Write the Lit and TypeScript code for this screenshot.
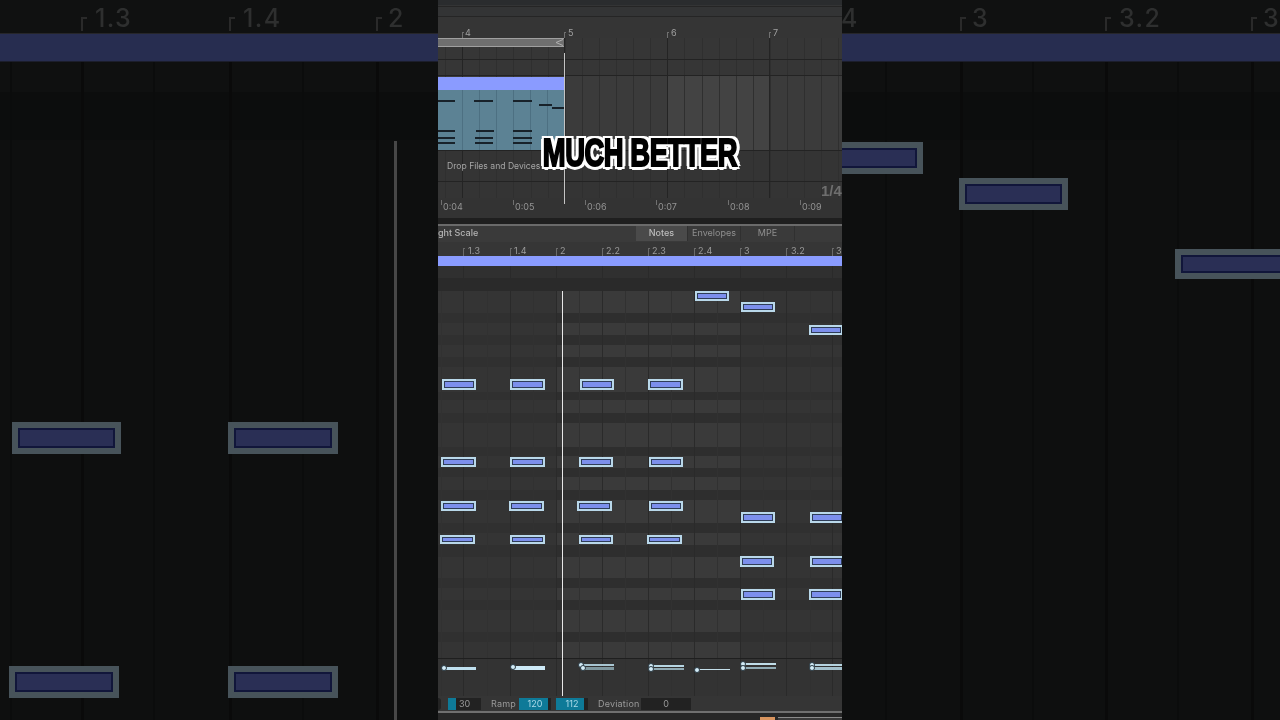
import { LitElement, html, css } from "lit";
import { customElement } from "lit/decorators.js";

const X0 = 438;
type Note = [number, number, number, number];

const MAJOR = [463.5, 510.5, 556.5, 602.5, 648.5, 694.5, 740.5, 786.5, 832.5];
const MINOR = [441, 487.5, 533, 579.5, 625.5, 671.5, 717.5, 763.5, 810];
const ARR_BARS = [462, 564, 667, 769];
const ARR_SUB: number[] = [];
for (let x = 445; x < 842; x += 17.1) ARR_SUB.push(Math.round(x));

const DARK_ROWS: [number, number][] = [
  [313, 323], [335, 345], [357, 367], [392, 400], [413, 423], [447, 456], [468, 477],
  [490, 500], [523, 533], [545, 557], [578, 588], [600, 610], [632, 642],
];

const NOTES: Note[] = [
  [695, 291, 34, 10], [741, 302, 34, 10], [809, 325, 34, 10],
  [442, 379, 34, 11], [510, 379, 35, 11], [580, 379, 34, 11], [648, 379, 35, 11],
  [441, 457, 35, 10], [510, 457, 35, 10], [579, 457, 34, 10], [649, 457, 34, 10],
  [441, 501, 35, 10], [509, 501, 35, 10], [577, 501, 35, 10], [649, 501, 34, 10],
  [440, 535, 35, 9], [510, 535, 35, 9], [579, 535, 34, 9], [647, 535, 35, 9],
  [741, 512, 34, 11], [810, 512, 34, 11],
  [740, 556, 34, 11], [810, 556, 34, 11],
  [741, 589, 34, 11], [809, 589, 34, 11],
];

// x, y, width, thickness, tone
const VEL: [number, number, number, number, string][] = [
  [444, 667, 32, 3, "#bfe0ef"],
  [513, 666, 32, 4, "#cdeaf7"],
  [581, 664, 33, 2, "#a9c6d2"], [583, 667, 31, 3, "#7f979f"],
  [651, 665, 33, 2, "#b7d6e3"], [651, 668, 33, 2, "#8fa9b3"],
  [697, 669, 33, 1, "#c4dfea"],
  [743, 663, 33, 2, "#c0dde9"], [743, 667, 33, 2, "#90abb5"],
  [812, 664, 30, 2, "#b6d3df"], [812, 667, 30, 3, "#a3c0cc"],
];

const CLIP_DASHES: Note[] = [
  [438, 100, 17, 1], [474, 100, 19, 1], [513, 100, 19, 1], [539, 104, 13, 1], [552, 107, 12, 1],
  [438, 130, 17, 1], [476, 130, 18, 1], [513, 130, 19, 1],
  [438, 137, 17, 1], [475, 137, 18, 1], [513, 137, 19, 1],
  [438, 142, 17, 1], [475, 142, 18, 1], [513, 142, 19, 1],
];

const pos = (x: number, y: number, w: number, h: number) =>
  `left:${x}px;top:${y}px;width:${w}px;height:${h}px`;

@customElement("side-panel")
class SidePanel extends LitElement {
  static properties = {
    origin: { type: Number },
    labels: { type: Array },
    major: { type: Array },
    minor: { type: Array },
    notes: { type: Array },
    playhead: { type: Number },
  };
  origin = 0;
  labels: [number, string][] = [];
  major: number[] = [];
  minor: number[] = [];
  notes: Note[] = [];
  playhead = 0;

  static styles = css`
    :host { display: block; width: 438px; height: 720px; }
    .wrap { position: relative; width: 100%; height: 100%; display: flex; flex-direction: column; overflow: hidden; background: #0e0f0f; filter: blur(0.7px); }
    .top { height: 33px; background: #101111; flex: none; }
    .band { height: 29px; background: #272d50; flex: none; border-top: 1px solid #26262a; border-bottom: 1px solid #1c1e2c; box-sizing: border-box; }
    .r1 { height: 30px; background: #0f1010; flex: none; }
    .r2 { height: 48px; background: #0c0d0d; flex: none; }
    .r3 { flex: 1; background: #0e0f0f; }
    .v { position: absolute; width: 3px; top: 62px; bottom: 0; background: #0a0a0a; }
    .v.min { width: 2px; background: #0b0c0c; }
    .tick { position: absolute; width: 6px; border-left: 2px solid #2a2a2a; border-top: 2px solid #2a2a2a; box-sizing: border-box; height: 14px; top: 17px; }
    .lab { position: absolute; top: 3px; font: 500 25px/30px "Inter", "Liberation Sans", sans-serif; letter-spacing: 1.4px; color: #2e2f2f; white-space: nowrap; }
    .note { position: absolute; box-sizing: border-box; border: 6px solid #47535a; background: #2a2f55; box-shadow: inset 0 0 0 2px #11163a; }
    .ph { position: absolute; top: 141px; bottom: 0; width: 3px; background: #474747; }
  `;
  render() {
    const o = this.origin;
    return html`<div class="wrap">
      <div class="top"></div><div class="band"></div><div class="r1"></div><div class="r2"></div><div class="r3"></div>
      ${this.minor.map((x) => html`<div class="v min" style="left:${x - o}px"></div>`)}
      ${this.major.map((x) => html`<div class="v" style="left:${x - o}px"></div>`)}
      ${this.labels.map(([x, t]) => html`<div class="lab" style="left:${x - o}px">${t}</div>`)}
      ${this.major.map((x) => html`<div class="tick" style="left:${x - o}px"></div>`)}
      ${this.notes.map((n) => html`<div class="note" style=${pos(n[0] - o, n[1], n[2], n[3])}></div>`)}
      ${this.playhead ? html`<div class="ph" style="left:${this.playhead - o}px"></div>` : ""}
    </div>`;
  }
}

@customElement("app-root")
class AppRoot extends LitElement {
  static styles = css`
    :host { display: flex; width: 1280px; height: 720px; background: #0e0f0f; overflow: hidden; font-family: "Inter", "Liberation Sans", sans-serif; }
    .center { position: relative; width: 404px; height: 720px; flex: none; display: flex; flex-direction: column; overflow: hidden; background: #333; }
    .sec { position: relative; flex: none; overflow: hidden; filter: blur(0.35px); }

    .s-top { height: 17px; background: #333435; }
    .s-top .strip { height: 5px; background: #2a2c2e; }
    .s-top .l1 { height: 1px; margin-top: 1px; background: #252525; }
    .s-top .l2 { height: 1px; margin-top: 9px; background: #252525; }

    .s-arul { height: 21px; background: #353535; }
    .arlab { position: absolute; top: 10px; font-size: 9px; line-height: 11px; color: #a0a0a0; }
    .artick { position: absolute; top: 15px; height: 6px; width: 2px; border-left: 1px solid #707070; border-top: 1px solid #707070; box-sizing: border-box; }

    .s-arr { height: 160px; background: #363636; }
    .lane-a { position: absolute; left: 0; right: 0; top: 37px; height: 75px; background: #3b3b3b; }
    .lane-hi { position: absolute; left: 229px; width: 102px; top: 37px; height: 75px; background: #434343; }
    .lane-c { position: absolute; left: 0; right: 0; top: 112px; height: 48px; background: #343434; }
    .hl { position: absolute; left: 0; right: 0; height: 1px; background: #232323; }
    .av { position: absolute; top: 0; bottom: 0; width: 1px; background: #2f2f2f; }
    .av.bar { background: #242424; }
    .clip { position: absolute; left: 0; top: 39px; width: 126px; height: 73px; background: #5c8294; }
    .clip-h { height: 13px; background: #8a9bff; }
    .clip-v { position: absolute; top: 13px; bottom: 0; width: 1px; background: #4d7082; }
    .dash { position: absolute; background: #18222a; }
    .loop { position: absolute; left: 0; top: 0; width: 126px; height: 9px; box-sizing: border-box; background: #6f6f6f; border-top: 1px solid #a0a0a0; border-bottom: 1px solid #a0a0a0; }
    .loop svg { position: absolute; right: 0; top: 0; }
    .drop { position: absolute; left: 9px; top: 122px; font-size: 8.6px; line-height: 13px; color: #a6a6a6; white-space: nowrap; }
    .frac { position: absolute; left: 383px; top: 144px; font: 700 15px/18px "Liberation Sans", sans-serif; color: #6e6e6e; white-space: nowrap; }

    .s-trul { height: 20px; background: #333; }
    .tlab { position: absolute; top: 3px; font-size: 9px; line-height: 11px; color: #949494; }
    .ttick { position: absolute; top: 2px; width: 1px; height: 5px; background: #707070; }

    .s-gap { height: 6px; background: #1f1f1f; }
    .s-line { height: 2px; background: #6a6a6a; }

    .s-tabs { height: 16px; background: #3a3a3a; display: flex; align-items: flex-start; }
    .scale { font-size: 9px; line-height: 14px; font-weight: 500; color: #b4b4b4; width: 198px; flex: none; white-space: nowrap; }
    .tab { font-size: 9px; color: #8f8f8f; height: 15px; padding-bottom: 2px; display: flex; align-items: center; justify-content: center; flex: none; box-sizing: border-box; border-right: 1px solid #303030; }
    .tab.on { background: #4a4a4a; color: #bdbdbd; font-weight: 500; }

    .s-prul { height: 14px; background: #363636; }
    .plab { position: absolute; top: 3px; font-size: 9px; line-height: 11px; color: #9c9c9c; letter-spacing: 0.2px; }
    .ptick { position: absolute; top: 6px; width: 2px; height: 8px; border-left: 1px solid #6a6a6a; border-top: 1px solid #6a6a6a; box-sizing: border-box; }

    .s-band { height: 10px; background: #8a9cff; }
    .s-empty { height: 25px; background: #2a2a2a; }
    .s-empty .up { height: 12px; background: #303030; }

    .s-roll { height: 367px; background: #3a3a3a; }
    .row { position: absolute; left: 0; right: 0; background: #2e2e2e; }
    .shade { position: absolute; top: 0; bottom: 0; background: rgba(50, 50, 50, 0.72); }
    .pv { position: absolute; top: 0; bottom: 0; width: 1px; background: #2a2a2a; }
    .pv.min { background: #313131; }
    .note { position: absolute; box-sizing: border-box; border: 2px solid #b9d8ea; background: #7c8fec; box-shadow: inset 0 0 0 1px #2e3d58; }
    .playhead { position: absolute; left: 124px; top: 291px; width: 1px; height: 405px; background: #e8e8e8; z-index: 2; }

    .s-vel { height: 38px; background: #333; border-top: 1px solid #1f1f1f; box-sizing: border-box; }
    .vb { position: absolute; }
    .dot { position: absolute; width: 4px; height: 4px; border-radius: 50%; background: #d3ecf7; border: 1px solid #2a3a44; }

    .s-ctl { height: 15px; background: #353535; display: flex; align-items: center; font-size: 9px; color: #9a9a9a; }
    .pill { width: 3px; height: 12px; background: #232323; border-radius: 0 6px 6px 0; margin-right: 7px; flex: none; }
    .box { height: 12px; background: #222; display: flex; align-items: center; justify-content: center; flex: none; box-sizing: border-box; color: #9a9a9a; position: relative; }
    .box .fill { position: absolute; left: 0; top: 0; bottom: 0; background: #0e7a98; }
    .box span { position: relative; }
    .box.hot { color: #a9d9e8; }
    .ctl-l { flex: none; white-space: nowrap; letter-spacing: 0.2px; }
    .s-foot { height: 9px; background: #272727; border-top: 2px solid #707070; box-sizing: border-box; position: relative; }
    .orange { position: absolute; left: 322px; top: 4px; width: 15px; height: 3px; background: #d9955f; }
    .fbtn { position: absolute; left: 340px; top: 4px; width: 64px; height: 3px; border-top: 1px solid #8a8a8a; box-sizing: border-box; background: #3a3a3a; }

    .title { position: absolute; left: 0; right: 0; top: 132px; text-align: center; z-index: 5; color: #000; white-space: nowrap;
      font: 700 38px/42px "Liberation Sans", sans-serif; letter-spacing: -0.6px;
      transform: scaleX(0.72);
      -webkit-text-stroke: 2px #000;
      text-shadow: 5px 0 0 #fff, -5px 0 0 #fff, 0 3.5px 0 #fff, 0 -3.5px 0 #fff, 4px 3px 0 #fff, -4px 3px 0 #fff, 4px -3px 0 #fff, -4px -3px 0 #fff; }
    .arrph { position: absolute; left: 126px; top: 53px; width: 1px; height: 151px; background: #c4c4c4; z-index: 3; }
  `;

  render() {
    const pr: [number, string][] = [[468, "1.3"], [514, "1.4"], [560, "2"], [606, "2.2"], [652, "2.3"], [698, "2.4"], [744, "3"], [791, "3.2"], [836, "3"]];
    const leftNotes: Note[] = [[12, 422, 109, 32], [228, 422, 110, 32], [9, 666, 110, 32], [228, 666, 110, 32]];
    const rightNotes: Note[] = [[780, 142, 143, 32], [959, 178, 109, 32], [1175, 249, 120, 30]];
    return html`
      <side-panel .origin=${0} .labels=${[[95, "1.3"], [243, "1.4"], [388, "2"]]} .major=${[81, 229, 376]} .minor=${[10, 153, 302]} .notes=${leftNotes} .playhead=${394}></side-panel>
      <div class="center">
        <div class="sec s-top"><div class="strip"></div><div class="l1"></div><div class="l2"></div></div>
        <div class="sec s-arul">
          ${[["4", 465], ["5", 568], ["6", 671], ["7", 773]].map(([t, x]) => html`<div class="arlab" style="left:${(x as number) - X0}px">${t}</div>`)}
          ${ARR_BARS.map((x) => html`<div class="artick" style="left:${x - X0}px"></div>`)}
        </div>
        <div class="sec s-arr">
          <div class="lane-a"></div><div class="lane-hi"></div><div class="lane-c"></div>
          ${ARR_SUB.map((x) => html`<div class="av" style="left:${x - X0}px"></div>`)}
          ${ARR_BARS.map((x) => html`<div class="av bar" style="left:${x - X0}px"></div>`)}
          <div class="hl" style="top:21px"></div>
          <div class="hl" style="top:37px"></div>
          <div class="hl" style="top:112px"></div>
          <div class="hl" style="top:143px"></div>
          <div class="clip">
            <div class="clip-h"></div>
            ${[24, 41, 58, 75, 92, 109].map((x) => html`<div class="clip-v" style="left:${x}px"></div>`)}
          </div>
          ${CLIP_DASHES.map((d) => html`<div class="dash" style=${pos(d[0] - X0, d[1] - 38, d[2], d[3] + 1)}></div>`)}
          <div class="loop"><svg width="10" height="7" viewBox="0 0 10 7"><path d="M9 0.5 L2 3.5 L9 6.5" fill="none" stroke="#b0b0b0" stroke-width="1"/></svg></div>
          <div class="drop">Drop Files and Devices</div>
          <div class="frac">1/4</div>
        </div>
        <div class="sec s-trul">
          ${[["0:04", 442], ["0:05", 514], ["0:06", 586], ["0:07", 657], ["0:08", 729], ["0:09", 801]].map(([t, x]) => html`
            <div class="ttick" style="left:${(x as number) - 1 - X0}px"></div>
            <div class="tlab" style="left:${(x as number) + 1 - X0}px">${t}</div>`)}
        </div>
        <div class="sec s-gap"></div>
        <div class="sec s-line"></div>
        <div class="sec s-tabs">
          <div class="scale">ght Scale</div>
          <div class="tab on" style="width:52px">Notes</div>
          <div class="tab" style="width:53px">Envelopes</div>
          <div class="tab" style="width:54px">MPE</div>
        </div>
        <div class="sec s-prul">
          ${pr.map(([x, t]) => html`<div class="plab" style="left:${x - X0 + 0}px">${t}</div>`)}
          ${MAJOR.map((x) => html`<div class="ptick" style="left:${Math.floor(x) - X0}px"></div>`)}
        </div>
        <div class="sec s-band"></div>
        <div class="sec s-empty"><div class="up"></div>
          ${MAJOR.map((x) => html`<div class="pv" style="left:${Math.floor(x) - X0}px"></div>`)}
        </div>
        <div class="sec s-roll">
          ${DARK_ROWS.map(([a, b]) => html`<div class="row" style="top:${a - 291}px;height:${b - a}px"></div>`)}
          <div class="shade" style="left:0;width:118px"></div>
          <div class="shade" style="left:302px;right:0"></div>
          ${MINOR.map((x) => html`<div class="pv min" style="left:${Math.floor(x) - X0}px"></div>`)}
          ${MAJOR.map((x) => html`<div class="pv" style="left:${Math.floor(x) - X0}px"></div>`)}
          ${NOTES.map((n) => html`<div class="note" style=${pos(n[0] - X0, n[1] - 291, n[2], n[3])}></div>`)}
        </div>
        <div class="sec s-vel">
          ${MINOR.map((x) => html`<div class="pv min" style="left:${Math.floor(x) - X0}px"></div>`)}
          ${MAJOR.map((x) => html`<div class="pv" style="left:${Math.floor(x) - X0}px"></div>`)}
          ${VEL.map((v) => html`
            <div class="vb" style="${pos(v[0] - X0, v[1] - 659, v[2], v[3])};background:${v[4]}"></div>
            <div class="dot" style="left:${v[0] - X0 - 3}px;top:${v[1] - 659 - 2}px"></div>`)}
        </div>
        <div class="sec s-ctl">
          <div class="pill"></div>
          <div class="box" style="width:33px"><div class="fill" style="width:8px"></div><span>30</span></div>
          <div class="ctl-l" style="margin-left:10px;width:28px">Ramp</div>
          <div class="box hot" style="width:32px"><div class="fill" style="width:29px"></div><span>120</span></div>
          <div class="box hot" style="width:32px;margin-left:5px"><div class="fill" style="width:28px"></div><span>112</span></div>
          <div class="ctl-l" style="margin-left:10px;width:43px">Deviation</div>
          <div class="box" style="width:50px"><span>0</span></div>
        </div>
        <div class="sec s-foot"><div class="orange"></div><div class="fbtn"></div></div>
        <div class="arrph"></div>
        <div class="playhead"></div>
        <div class="title">MUCH BETTER</div>
      </div>
      <side-panel .origin=${842} .labels=${[[832, ".4"], [972, "3"], [1119, "3.2"], [1263, "3"]]} .major=${[960, 1105, 1251]} .minor=${[885, 1032, 1177]} .notes=${rightNotes}></side-panel>
    `;
  }
}
